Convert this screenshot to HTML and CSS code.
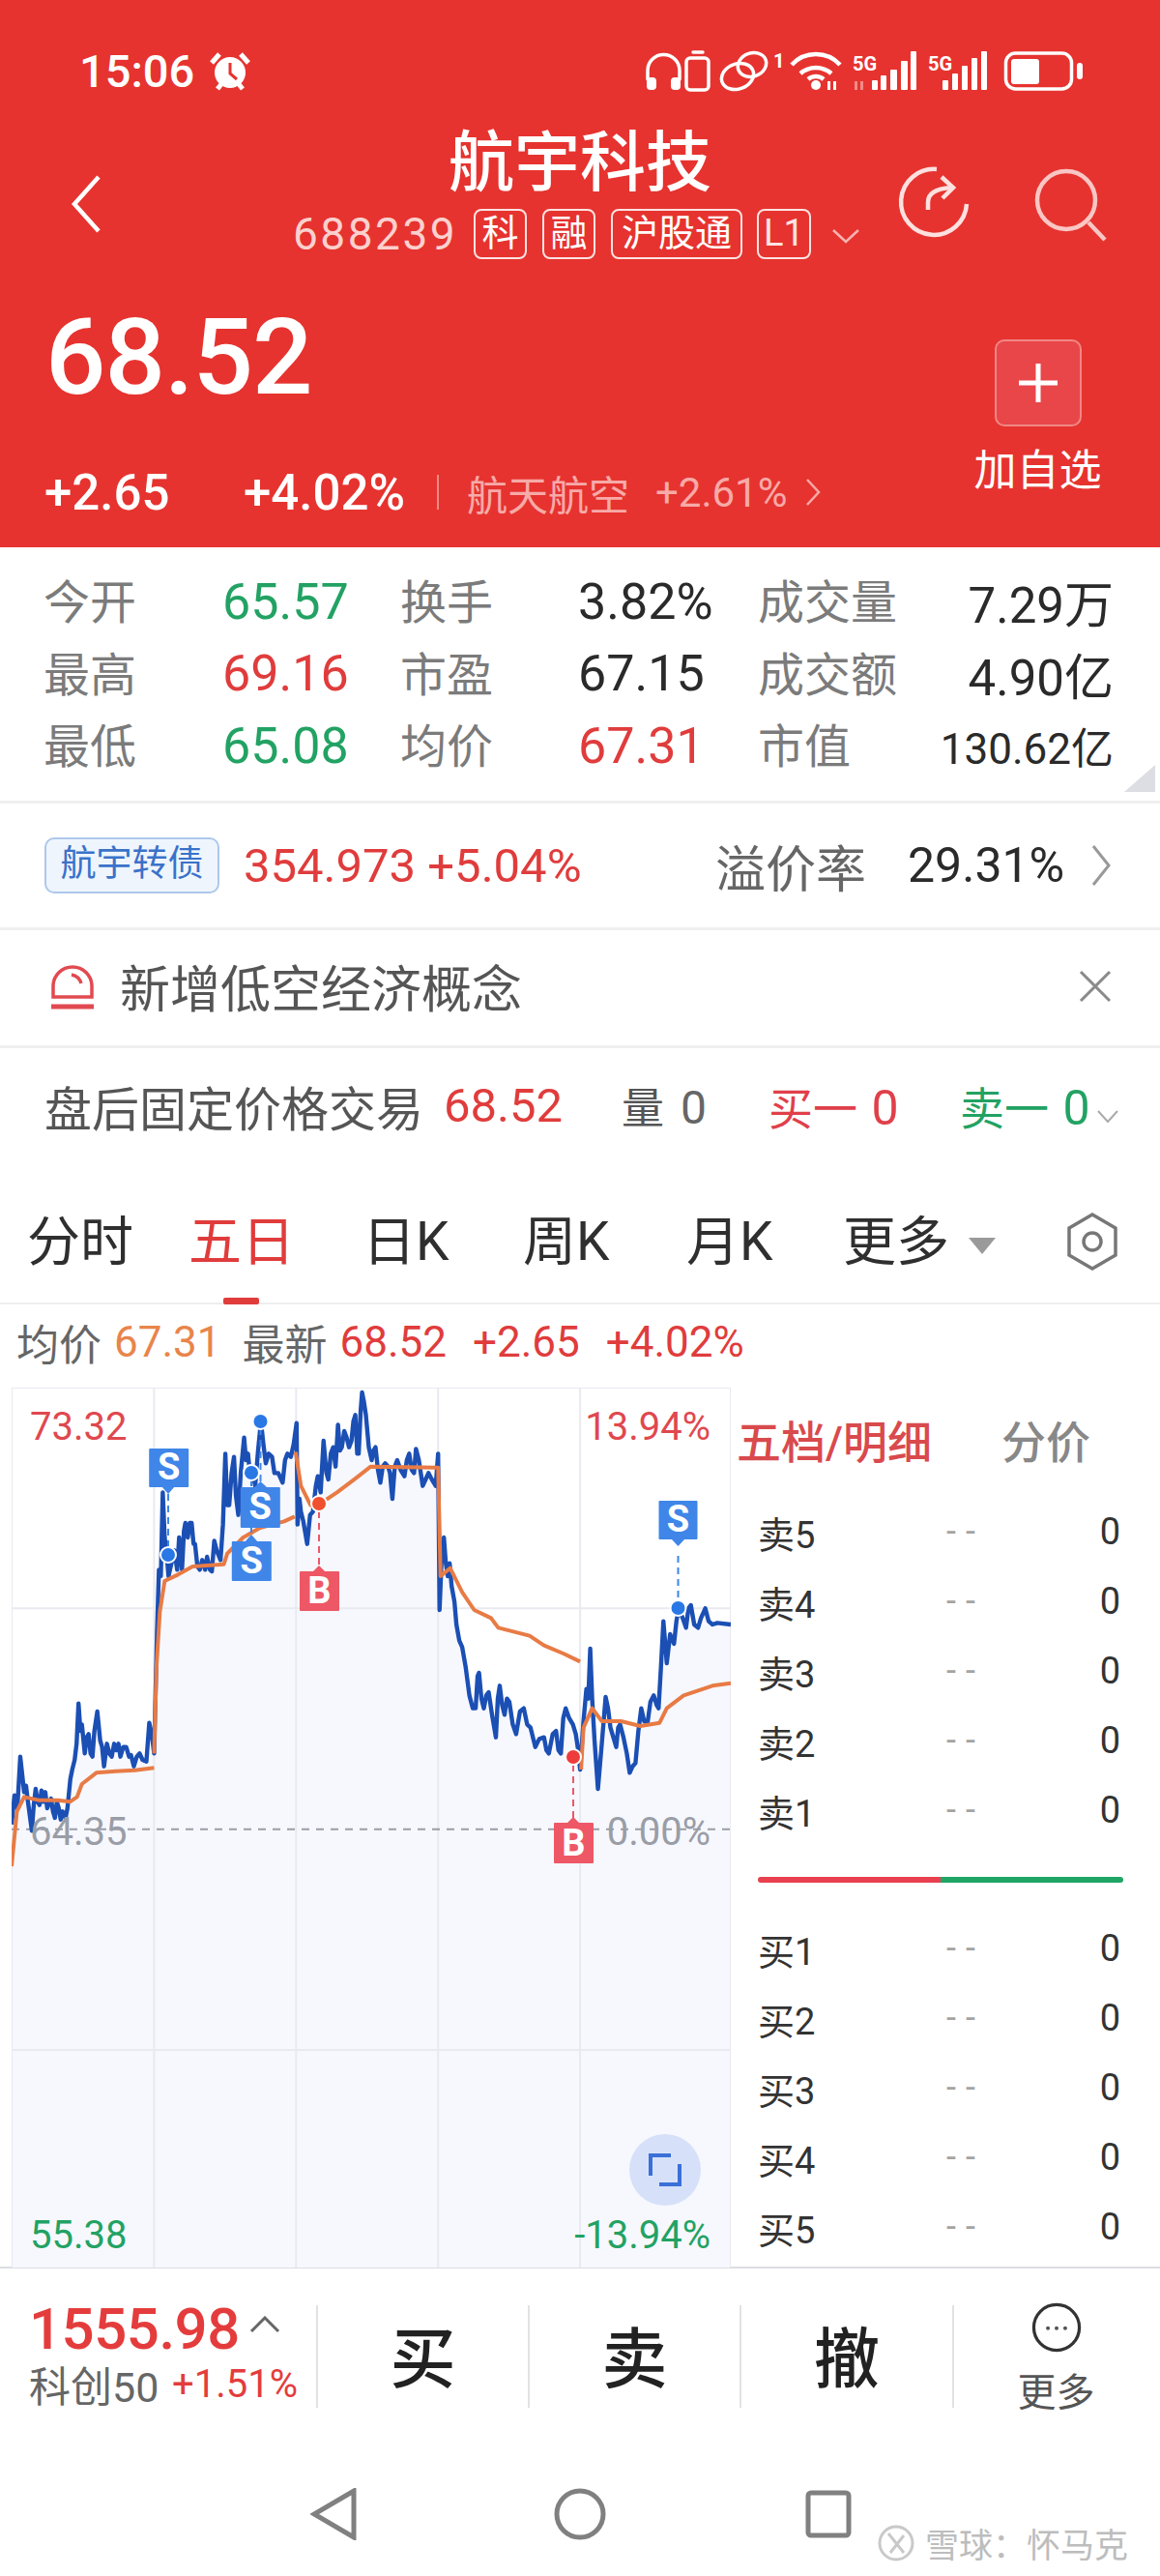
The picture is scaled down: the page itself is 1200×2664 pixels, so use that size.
FILE: index.html
```html
<!DOCTYPE html>
<html lang="zh">
<head>
<meta charset="utf-8">
<title>航宇科技</title>
<link rel="stylesheet" href="styles.css">
</head>
<body>
<div class="page">
  <header class="hero">
    <div class="status">
      <span class="time">15:06</span>
      <svg class="alarm" viewBox="0 0 44 44"><path d="M3 13 L11 4 M41 13 L33 4" class="alarm-ear"/><circle cx="22" cy="23" r="16" class="alarm-body"/><path d="M22 13 V24 L29 30" class="alarm-hand"/><path d="M9 40 L13 35 M35 40 L31 35" class="alarm-ear"/></svg>
      <svg class="status-icons" viewBox="0 0 460 50">
        <g class="si">
          <path d="M8 32 V23 a16.500 16.500 0 0 1 33 0 V32"/>
          <rect x="48" y="10" width="23" height="33" rx="4"/>
          <path d="M55 4 H65"/>
          <ellipse cx="116" cy="17" rx="15" ry="12" transform="rotate(-20 116 17)"/>
          <ellipse cx="101" cy="29" rx="17" ry="13" transform="rotate(-20 101 29)"/>
          <path class="si-w" d="M157 17 a34 34 0 0 1 50 0"/>
          <path class="si-w" d="M166 26 a24 24 0 0 1 32 0"/>
          <path class="si-w" d="M174 32 a12 12 0 0 1 16 0"/>
          <rect x="378.500" y="5" width="68" height="37" rx="10"/>
        </g>
        <g class="sf">
          <rect x="7" y="30" width="10" height="13" rx="4"/>
          <rect x="32" y="30" width="10" height="13" rx="4"/>
          <circle cx="182" cy="38" r="5"/>
          <rect x="194" y="34" width="3" height="9"/>
          <rect x="200" y="34" width="3" height="9"/>
          <rect class="sf-dim" x="222" y="34" width="3" height="9"/>
          <rect class="sf-dim" x="228" y="34" width="3" height="9"/>
          <rect x="240" y="33" width="6" height="10" rx="1"/>
          <rect x="249" y="28" width="6" height="15" rx="1"/>
          <rect x="259" y="22" width="7" height="21" rx="1"/>
          <rect x="270" y="13" width="7" height="30" rx="1"/>
          <rect x="280" y="3" width="6" height="40" rx="1"/>
          <rect x="313" y="33" width="6" height="10" rx="1"/>
          <rect x="323" y="26" width="6" height="17" rx="1"/>
          <rect x="333" y="18" width="6" height="25" rx="1"/>
          <rect x="343" y="10" width="6" height="33" rx="1"/>
          <rect x="353" y="3" width="6" height="40" rx="1"/>
          <rect x="384" y="11" width="29" height="26" rx="3"/>
          <rect x="452" y="15" width="6" height="17" rx="3"/>
          <text x="138" y="20" class="si-one">1</text>
          <text x="220" y="23" class="si-5g">5G</text>
          <text x="298" y="23" class="si-5g">5G</text>
        </g>
      </svg>
    </div>
    <div class="nav">
      <svg class="back" viewBox="0 0 34 62"><path d="M30 3 L5 31 L30 59"/></svg>
      <div class="nav-mid">
        <div class="title">航宇科技</div>
        <div class="subline">
          <span class="code">688239</span>
          <span class="tag">科</span>
          <span class="tag">融</span>
          <span class="tag tag-wide">沪股通</span>
          <span class="tag tag-l">L1</span>
          <svg class="sub-chev" viewBox="0 0 30 16"><path d="M2 2 L15 14 L28 2"/></svg>
        </div>
      </div>
      <svg class="refresh" viewBox="0 0 76 78"><path d="M41 4 A34 34 0 1 0 72 40"/><path d="M32 46 V38 C32 28 41 24 56 23"/><path d="M46 12 L58 23 L47 34"/></svg>
      <svg class="search" viewBox="0 0 76 78"><circle cx="33" cy="35" r="30"/><path d="M56 58 L73 76"/></svg>
    </div>
    <div class="quote">
      <div class="quote-main">
        <div class="price">68.52</div>
        <div class="change">
          <span class="chg-abs">+2.65</span>
          <span class="chg-pct">+4.02%</span>
          <span class="chg-sep"></span>
          <span class="sector">航天航空</span>
          <span class="sector-pct">+2.61%</span>
          <svg class="sector-chev" viewBox="0 0 16 30"><path d="M2 2 L14 15 L2 28"/></svg>
        </div>
      </div>
      <div class="add">
        <div class="add-box"><svg viewBox="0 0 44 44"><path d="M22 2 V42 M2 22 H42"/></svg></div>
        <div class="add-label">加自选</div>
      </div>
    </div>
  </header>

  <section class="stats">
    <span class="s-l">今开</span><span class="s-v green">65.57</span><span class="s-l">换手</span><span class="s-v">3.82%</span><span class="s-l">成交量</span><span class="s-v s-r">7.29万</span>
    <span class="s-l">最高</span><span class="s-v red">69.16</span><span class="s-l">市盈</span><span class="s-v">67.15</span><span class="s-l">成交额</span><span class="s-v s-r">4.90亿</span>
    <span class="s-l">最低</span><span class="s-v green">65.08</span><span class="s-l">均价</span><span class="s-v red">67.31</span><span class="s-l">市值</span><span class="s-v s-r s-small">130.62亿</span>
    <i class="corner"></i>
  </section>

  <section class="bond">
    <span class="bond-tag">航宇转债</span>
    <span class="bond-val">354.973 +5.04%</span>
    <span class="bond-prem">溢价率</span>
    <span class="bond-rate">29.31%</span>
    <svg class="bond-chev" viewBox="0 0 20 44"><path d="M2 2 L18 22 L2 42"/></svg>
  </section>

  <section class="notice">
    <svg class="notice-ic" viewBox="0 0 46 48"><path d="M3 35 V24 a20 20 0 0 1 40 0 V35 Z"/><path d="M22 12 a13 13 0 0 1 10 9"/><path d="M1 45 H45" class="notice-base"/></svg>
    <span class="notice-text">新增低空经济概念</span>
    <svg class="notice-x" viewBox="0 0 34 34"><path d="M2 2 L32 32 M32 2 L2 32"/></svg>
  </section>

  <section class="after">
    <span class="af-label">盘后固定价格交易</span>
    <span class="af-price">68.52</span>
    <span class="af-vol">量 <em>0</em></span>
    <span class="af-buy">买一 <em>0</em></span>
    <span class="af-sell">卖一 <em>0</em></span>
    <svg class="af-chev" viewBox="0 0 22 14"><path d="M1 1 L11 12 L21 1"/></svg>
  </section>

  <nav class="tabs">
    <span class="tab">分时</span>
    <span class="tab tab-on">五日</span>
    <span class="tab">日K</span>
    <span class="tab">周K</span>
    <span class="tab">月K</span>
    <span class="tab tab-more">更多<i class="tri"></i></span>
    <svg class="hex" viewBox="0 0 54 62"><path d="M27 3 L51 17 V45 L27 59 L3 45 V17 Z"/><circle cx="27" cy="31" r="9"/></svg>
  </nav>

  <div class="legend">
    <span class="lg-l">均价</span><span class="lg-o">67.31</span>
    <span class="lg-l lg-l2">最新</span><span class="lg-r">68.52</span><span class="lg-r">+2.65</span><span class="lg-r">+4.02%</span>
  </div>

  <div class="market">
    <div class="chart">
      <svg class="plot" viewBox="24 135 1494 2730" preserveAspectRatio="none">
        <polygon class="area" points="24,1490 30,1400 42,1280 50,1390 58,1400 66,1510 74,1380 82,1430 90,1390 98,1440 106,1410 114,1470 122,1430 130,1470 140,1440 146,1350 155,1290 163,1115 170,1180 176,1270 184,1210 192,1280 202,1140 208,1230 216,1310 222,1240 232,1280 242,1240 250,1280 262,1250 278,1310 290,1270 304,1295 310,1175 320,1270 326,900 330,700 338,460 342,600 350,720 372,600 378,700 385,555 398,555 405,620 415,690 430,660 440,700 445,610 458,670 468,340 476,500 486,350 495,530 507,290 515,340 523,380 530,440 542,240 552,370 565,350 587,430 597,340 610,310 616,245 618,560 625,520 638,620 650,520 660,410 672,300 682,420 692,320 702,250 710,320 720,260 730,300 738,220 745,340 752,150 760,220 772,360 780,320 790,430 800,370 815,480 825,360 840,410 850,340 860,400 864,325 878,440 890,400 905,440 910,340 913,825 922,600 930,720 938,750 948,870 960,940 975,1090 988,1130 995,1020 1005,1130 1015,1080 1030,1220 1038,1060 1048,1150 1058,1110 1072,1210 1088,1130 1112,1250 1130,1220 1140,1270 1155,1200 1165,1270 1175,1130 1190,1180 1200,1250 1205,1320 1218,1070 1226,945 1235,1230 1242,1380 1258,1095 1268,1190 1280,1250 1288,1180 1308,1330 1320,1300 1332,1130 1345,1175 1358,1090 1368,1130 1378,860 1385,990 1392,900 1400,930 1410,820 1425,880 1435,810 1450,880 1465,820 1480,870 1518,870 1518,2865 24,2865"/>
        <g class="grid">
          <path d="M320 135 V2865 M615 135 V2865 M910 135 V2865 M1205 135 V2865 M1518 135 V2865 M24 135 V2865 M24 135 H1518 M24 820 H1518 M24 2190 H1518"/>
        </g>
        <path class="mid" d="M24 1505 H1518"/>
        <polyline class="price-line" points="24,1490 30,1400 36,1440 42,1280 50,1390 54,1370 58,1420 66,1510 70,1430 74,1380 78,1420 82,1430 86,1385 90,1420 94,1390 98,1440 106,1410 110,1450 114,1470 118,1420 122,1440 126,1475 130,1450 136,1470 140,1440 146,1350 150,1320 155,1290 159,1240 163,1115 167,1200 170,1180 176,1270 180,1220 184,1210 188,1270 192,1280 196,1200 202,1140 208,1230 212,1250 216,1310 222,1240 227,1270 232,1280 237,1240 242,1260 246,1240 250,1280 256,1250 262,1250 268,1280 272,1275 278,1310 284,1280 290,1270 296,1290 304,1295 310,1175 316,1220 320,1270 326,900 330,700 334,720 338,460 342,600 346,650 350,720 356,680 362,640 368,700 372,600 378,700 382,580 385,555 390,600 394,555 398,555 402,620 405,620 410,690 415,700 420,670 426,700 430,660 436,700 440,705 445,610 450,640 458,670 463,560 468,340 472,500 476,500 481,400 486,350 490,470 495,530 500,400 507,290 511,360 515,340 519,400 523,380 530,440 536,330 542,240 547,310 552,370 558,340 565,350 570,400 578,400 587,430 592,360 597,340 604,350 610,310 616,245 618,560 622,480 625,520 630,550 638,620 644,530 650,520 656,440 660,410 666,460 672,300 678,400 682,420 687,340 692,320 697,380 702,250 706,330 710,320 715,270 720,290 725,320 730,300 734,240 738,220 742,340 745,340 749,210 752,150 756,180 760,220 766,320 772,360 776,330 780,320 785,390 790,430 795,380 800,370 806,380 810,400 815,480 820,380 825,360 832,390 840,410 845,360 850,340 855,390 860,400 864,325 870,360 878,440 884,420 890,400 897,420 905,440 910,340 913,825 918,640 922,600 926,680 930,720 934,680 938,750 944,800 948,870 954,920 960,940 967,1000 975,1090 982,1130 988,1130 992,1030 995,1020 1000,1100 1005,1130 1010,1090 1015,1080 1022,1150 1030,1220 1034,1100 1038,1060 1043,1120 1048,1150 1053,1100 1058,1110 1065,1180 1072,1210 1080,1140 1088,1130 1095,1180 1102,1190 1112,1250 1120,1225 1130,1220 1135,1260 1140,1270 1148,1210 1155,1200 1160,1260 1165,1270 1170,1160 1175,1130 1182,1160 1190,1180 1196,1210 1200,1250 1205,1320 1212,1170 1218,1070 1222,1100 1226,945 1230,1100 1235,1230 1242,1380 1250,1240 1258,1095 1263,1130 1268,1190 1274,1220 1280,1250 1284,1190 1288,1180 1295,1220 1302,1270 1308,1330 1314,1310 1320,1300 1326,1200 1332,1130 1338,1170 1345,1175 1351,1110 1358,1090 1364,1120 1368,1130 1373,1000 1378,860 1385,990 1392,900 1400,930 1405,860 1410,820 1418,850 1425,880 1430,820 1435,810 1442,870 1450,880 1456,850 1465,820 1472,860 1480,870 1490,865 1518,870"/>
        <polyline class="avg-line" points="24,1620 35,1450 50,1405 80,1415 120,1415 145,1420 160,1405 170,1365 200,1330 240,1325 280,1322 320,1315"/>
        <polyline class="avg-line" points="320,1270 325,1000 332,830 342,735 370,715 400,690 465,683 472,650 505,600 540,570 590,550 612,535"/>
        <polyline class="avg-line" points="614,335 625,440 645,500 665,495 700,460 740,415 770,380 910,383 915,720 935,695 960,770 985,825 1020,850 1035,880 1100,905 1130,935 1170,960 1205,985"/>
        <polyline class="avg-line" points="1207,1320 1212,1190 1230,1130 1250,1170 1290,1170 1330,1185 1370,1175 1385,1130 1420,1090 1480,1060 1518,1052"/>
      </svg>
      <svg class="marks" viewBox="0 0 744 910">
        <g class="mk-s">
          <path class="dash-s" d="M162 110 V165 M248 95 V150 M257.500 42 V98 M689.500 174 V222"/>
          <rect x="227.800" y="159" width="41" height="41" rx="1"/><path d="M241 160 L248 152 L255 160 Z"/>
          <rect x="236.800" y="103" width="41" height="42" rx="1"/><path d="M250 104 L257.500 97 L265 104 Z"/>
          <rect x="142.200" y="63" width="41" height="40" rx="1"/><path d="M155 102 L162 110 L169 102 Z"/>
          <rect x="669.500" y="117" width="40" height="40" rx="1"/><path d="M682 156 L689.500 164 L697 156 Z"/>
          <circle class="dot" cx="162" cy="173" r="8"/>
          <circle class="dot" cx="248" cy="88" r="8"/>
          <circle class="dot" cx="257.500" cy="35" r="8"/>
          <circle class="dot" cx="689.500" cy="228" r="8"/>
        </g>
        <g class="mk-b">
          <path class="dash-b" d="M318 128 V185 M581 390 V445"/>
          <rect x="298" y="190" width="41" height="41" rx="1"/><path d="M311 191 L318 184 L325 191 Z"/>
          <rect x="561" y="450" width="41" height="42" rx="1"/><path d="M574 451 L581 444 L588 451 Z"/>
          <circle class="dot-o" cx="318" cy="120" r="8"/>
          <circle class="dot-r" cx="581" cy="382" r="8"/>
        </g>
        <g class="mk-t">
          <text x="162.700" y="95">S</text><text x="257.300" y="136">S</text><text x="248.300" y="192">S</text><text x="318.500" y="223">B</text><text x="689.500" y="149">S</text><text x="581.500" y="484">B</text>
        </g>
      </svg>
      <span class="ax ax-tl red">73.32</span>
      <span class="ax ax-tr red">13.94%</span>
      <span class="ax ax-ml">64.35</span>
      <span class="ax ax-mr">0.00%</span>
      <span class="ax ax-bl green">55.38</span>
      <span class="ax ax-br green">-13.94%</span>
      <div class="expand"><svg viewBox="0 0 34 34"><path d="M2 23 V2 H23 M32 11 V32 H11"/></svg></div>
    </div>
    <aside class="book">
      <div class="book-head"><span class="bh-on">五档/明细</span><span class="bh-off">分价</span></div>
      <div class="b-row"><span>卖5</span><span class="dd">--</span><span class="b-n">0</span></div>
      <div class="b-row"><span>卖4</span><span class="dd">--</span><span class="b-n">0</span></div>
      <div class="b-row"><span>卖3</span><span class="dd">--</span><span class="b-n">0</span></div>
      <div class="b-row"><span>卖2</span><span class="dd">--</span><span class="b-n">0</span></div>
      <div class="b-row"><span>卖1</span><span class="dd">--</span><span class="b-n">0</span></div>
      <div class="b-bar"><i class="bar-r"></i><i class="bar-g"></i></div>
      <div class="b-row"><span>买1</span><span class="dd">--</span><span class="b-n">0</span></div>
      <div class="b-row"><span>买2</span><span class="dd">--</span><span class="b-n">0</span></div>
      <div class="b-row"><span>买3</span><span class="dd">--</span><span class="b-n">0</span></div>
      <div class="b-row"><span>买4</span><span class="dd">--</span><span class="b-n">0</span></div>
      <div class="b-row"><span>买5</span><span class="dd">--</span><span class="b-n">0</span></div>
    </aside>
  </div>

  <footer class="toolbar">
    <div class="index">
      <div class="idx-top"><span class="idx-val">1555.98</span><svg class="idx-up" viewBox="0 0 32 18"><path d="M2 16 L16 2 L30 16"/></svg></div>
      <div class="idx-sub"><span class="idx-name">科创50</span><span class="idx-pct">+1.51%</span></div>
    </div>
    <div class="act">买</div>
    <div class="act">卖</div>
    <div class="act">撤</div>
    <div class="more">
      <svg viewBox="0 0 64 64"><circle cx="32" cy="32" r="29"/><circle class="md" cx="21" cy="33" r="2.500"/><circle class="md" cx="32" cy="33" r="2.500"/><circle class="md" cx="43" cy="33" r="2.500"/></svg>
      <span>更多</span>
    </div>
  </footer>

  <div class="sysnav">
    <svg class="sys-back" viewBox="0 0 48 54"><path d="M45 3 V51 L4 27 Z"/></svg>
    <svg class="sys-home" viewBox="0 0 54 54"><circle cx="27" cy="27" r="24"/></svg>
    <svg class="sys-rec" viewBox="0 0 48 50"><rect x="3" y="3" width="42" height="44" rx="3"/></svg>
    <div class="wm">
      <svg viewBox="0 0 40 40"><circle cx="20" cy="20" r="17"/><path d="M12 10 L28 30 M28 12 L14 30"/></svg>
      <span>雪球：怀马克</span>
    </div>
  </div>
</div>
</body>
</html>
```
FILE: styles.css
```css
* { box-sizing: border-box; }
html, body { margin: 0; padding: 0; background: #fff; }
body { font-family: Roboto, "Noto Sans CJK SC", sans-serif; color: #2a2a2a; }
.page { width: 1200px; height: 2664px; overflow: hidden; display: flex; flex-direction: column; }
svg { display: block; fill: none; }
em { font-style: normal; }
.red { color: #e03c3c; }
.green { color: #22a263; }

/* hero */
.hero { height: 566px; background: #e6332f; color: #fff; flex: none; display: flex; flex-direction: column; }
.status { height: 125px; padding: 49px 0 0 82px; display: flex; align-items: flex-start; }
.time { font-size: 47px; font-weight: 500; line-height: 50px; width: 134px; }
.alarm { width: 44px; height: 44px; margin-top: 3px; }
.alarm-body { fill: #fff; }
.alarm-ear { stroke: #fff; stroke-width: 5; }
.alarm-hand { stroke: #e6332f; stroke-width: 3; }
.status-icons { width: 460px; height: 50px; margin-left: 402px; margin-top: 1px; }
.si path, .si rect, .si ellipse { stroke: #fff; stroke-width: 3.500; fill: none; stroke-linecap: round; }
.si .si-w { stroke-width: 4.500; stroke-linecap: butt; }
.sf { fill: #fff; }
.sf-dim { fill: #f28b88; }
.si-one { font-size: 20px; font-weight: 700; }
.si-5g { font-size: 20px; font-weight: 700; }

.nav { height: 152px; position: relative; display: flex; padding-left: 72px; align-items: flex-start; }
.back { width: 34px; height: 62px; margin-top: 55px; }
.back path { stroke: #fff; stroke-width: 4.500; }
.nav-mid { width: 826px; display: flex; flex-direction: column; align-items: center; }
.title { font-size: 68px; line-height: 88px; font-weight: 500; text-align: center; padding-left: 162px; width: 826px; }
.subline { display: flex; align-items: center; width: 826px; padding-left: 197px; height: 54px; margin-top: 2px; }
.code { font-size: 46px; letter-spacing: 2.500px; color: #fbd0ce; width: 187px; }
.tag { width: 55px; height: 52px; border: 2px solid #fde3e2; border-radius: 8px; font-size: 38px; line-height: 46px; text-align: center; margin-right: 16px; color: #fff; flex: none; }
.tag-wide { width: 136px; margin-right: 15px; }
.tag-l { width: 56px; margin-right: 21px; color: #fde3e2; }
.sub-chev { width: 30px; height: 16px; margin-top: 4px; }
.sub-chev path { stroke: #f7b3b1; stroke-width: 2.500; }
.refresh { width: 76px; height: 78px; margin: 46px 0 0 -4px; flex: none; }
.refresh path { stroke: #fde0df; stroke-width: 4.500; }
.search { width: 76px; height: 78px; margin: 47px 0 0 66px; flex: none; }
.search circle, .search path { stroke: #f9c6c4; stroke-width: 4.500; }

.quote { flex: 1; display: flex; justify-content: space-between; padding: 0 60px 0 46px; }
.price { font-size: 110px; line-height: 120px; font-weight: 500; margin: 33px 0 0 1px; letter-spacing: -1px; }
.change { display: flex; align-items: center; margin-top: 54px; height: 50px; }
.chg-abs { font-size: 51px; font-weight: 500; width: 206px; }
.chg-pct { font-size: 51px; font-weight: 500; width: 200px; }
.chg-sep { width: 2px; height: 36px; background: #f08a87; margin-right: 29px; }
.sector { font-size: 42px; color: #f7aaa8; width: 195px; }
.sector-pct { font-size: 42px; color: #f7aaa8; width: 155px; white-space: nowrap; }
.sector-chev { width: 16px; height: 30px; }
.sector-chev path { stroke: #f7aaa8; stroke-width: 2.500; }
.add { width: 133px; display: flex; flex-direction: column; align-items: center; padding-top: 74px; }
.add-box { width: 90px; height: 90px; border: 2px solid #f08785; border-radius: 10px; background: #e9464a; display: flex; align-items: center; justify-content: center; }
.add-box svg { width: 44px; height: 44px; }
.add-box path { stroke: #fff; stroke-width: 5; }
.add-label { font-size: 44px; line-height: 60px; margin-top: 16px; white-space: nowrap; }

/* stats */
.stats { position: relative; height: 265px; flex: none; padding: 19px 48px 0 45px; display: grid; grid-template-columns: 185px 184px 184px 186px 180px 1fr; grid-auto-rows: 74.500px; align-items: center; border-bottom: 3px solid #efefef; }
.s-l { font-size: 48px; color: #7b7b7b; white-space: nowrap; padding-bottom: 6px; }
.s-v { font-size: 52px; white-space: nowrap; }
.s-r { justify-self: end; font-size: 51px; }
.s-small { font-size: 44px; }
.corner { position: absolute; right: 5px; bottom: 9px; width: 32px; height: 28px; background: #dcdee3; clip-path: polygon(100% 0, 100% 100%, 0 100%); }

/* bond */
.bond { height: 131px; flex: none; display: flex; align-items: center; padding-left: 46px; border-bottom: 3px solid #efefef; }
.bond-tag { width: 181px; height: 58px; border: 2px solid #aec8ea; border-radius: 10px; background: #eef5fd; color: #3a72c9; font-size: 37px; line-height: 52px; text-align: center; margin-right: 25px; }
.bond-val { font-size: 49px; color: #e03c3c; width: 488px; white-space: nowrap; }
.bond-prem { font-size: 52px; color: #666; width: 199px; }
.bond-rate { font-size: 50px; color: #2a2a2a; width: 190px; }
.bond-chev { width: 20px; height: 44px; }
.bond-chev path { stroke: #999; stroke-width: 3; }

/* notice */
.notice { height: 122px; flex: none; display: flex; align-items: center; padding: 0 0 4px 52px; border-bottom: 3px solid #efefef; }
.notice-ic { width: 46px; height: 48px; }
.notice-ic path { stroke: #e14a50; stroke-width: 3.500; }
.notice-ic .notice-base { stroke-width: 5; }
.notice-text { font-size: 52px; color: #555; margin-left: 26px; width: 992px; white-space: nowrap; }
.notice-x { width: 34px; height: 34px; }
.notice-x path { stroke: #8a8a8a; stroke-width: 3; }

/* after hours */
.after { height: 126px; flex: none; display: flex; align-items: center; padding: 0 0 8px 46px; position: relative; }
.af-label { font-size: 49px; color: #555; width: 413px; white-space: nowrap; }
.af-price { font-size: 49px; color: #e03c3c; width: 184px; }
.af-vol { font-size: 44px; color: #555; width: 152px; }
.af-vol em { color: #666; margin-left: 6px; font-size: 48px; }
.af-buy { font-size: 46px; color: #e0404a; width: 198px; }
.af-buy em, .af-sell em { font-size: 50px; margin-left: 3px; }
.af-sell { font-size: 46px; color: #22a263; width: 142px; white-space: nowrap; }
.af-chev { width: 22px; height: 14px; margin-top: 24px; }
.af-chev path { stroke: #aaa; stroke-width: 2; }

/* tabs */
.tabs { height: 139px; flex: none; display: grid; grid-template-columns: 167px 180px 166px 169px 162px 231px 1fr; padding: 0 0 0 28px; align-items: start; border-bottom: 2px solid #eeeeee; position: relative; }
.tab { font-size: 55px; line-height: 74px; margin-top: 37px; color: #2f2f2f; white-space: nowrap; }
.tab-on { color: #e03c3c; position: relative; height: 102px; }
.tab-on::after { content: ""; position: absolute; left: 36px; bottom: 0; width: 37px; height: 7px; background: #e03c3c; border-radius: 2px; }
.tri { display: inline-block; width: 0; height: 0; border-left: 14px solid transparent; border-right: 14px solid transparent; border-top: 17px solid #9a9a9a; margin-left: 20px; vertical-align: 6px; }
.hex { width: 54px; height: 62px; margin-top: 43px; }
.hex path, .hex circle { stroke: #777; stroke-width: 3.500; }

/* legend */
.legend { height: 86px; flex: none; display: flex; align-items: center; padding: 0 0 9px 17px; font-size: 44px; white-space: nowrap; }
.lg-l { color: #666; margin-right: 13px; }
.lg-l2 { margin-left: 22px; }
.lg-o { color: #e8854b; }
.lg-r { color: #e03c3c; margin-right: 27px; }

/* chart */
.market { display: flex; height: 911px; flex: none; padding-left: 12px; border-bottom: 2px solid #dcdde2; }
.chart { position: relative; width: 744px; height: 910px; flex: none; }
.plot, .marks { position: absolute; left: 0; top: 0; width: 744px; height: 910px; }
.area { fill: #f6f8fe; }
.grid path { stroke: #e9eaf0; stroke-width: 2; vector-effect: non-scaling-stroke; }
.mid { stroke: #9a9da6; stroke-width: 2; stroke-dasharray: 8 7; vector-effect: non-scaling-stroke; }
.price-line { stroke: #1b4fb4; stroke-width: 4.400; vector-effect: non-scaling-stroke; stroke-linejoin: round; }
.avg-line { stroke: #e87b45; stroke-width: 4; vector-effect: non-scaling-stroke; stroke-linejoin: round; }
.mk-s rect, .mk-s path { fill: #3f86e8; }
.mk-b rect, .mk-b path { fill: #ee5766; }
.mk-s .dash-s { fill: none; stroke: #3f86e8; stroke-width: 2; stroke-dasharray: 7 5; }
.mk-b .dash-b { fill: none; stroke: #ee5766; stroke-width: 2; stroke-dasharray: 7 5; }
.dot { fill: #2a78e6; stroke: #fff; stroke-width: 2; }
.dot-o { fill: #f0502e; stroke: #fff; stroke-width: 2; }
.dot-r { fill: #ee3c3c; stroke: #fff; stroke-width: 2; }
.mk-t text { fill: #fff; font-size: 38px; font-weight: 700; text-anchor: middle; }
.ax { position: absolute; font-size: 40px; line-height: 46px; color: #9a9da6; white-space: nowrap; }
.ax.red { color: #e0484f; }
.ax.green { color: #22a263; }
.ax-tl { left: 19px; top: 18px; }
.ax-tr { right: 21px; top: 18px; }
.ax-ml { left: 19px; top: 437px; }
.ax-mr { right: 21px; top: 437px; }
.ax-bl { left: 19px; top: 854px; }
.ax-br { right: 21px; top: 854px; }
.expand { position: absolute; left: 639px; top: 772px; width: 74px; height: 74px; border-radius: 50%; background: #d6e1f9; display: flex; align-items: center; justify-content: center; }
.expand svg { width: 34px; height: 34px; }
.expand path { stroke: #3a6fd8; stroke-width: 4; }

/* order book */
.book { flex: 1; padding-left: 6px; }
.book-head { height: 113px; display: flex; align-items: flex-start; font-size: 46px; line-height: 56px; padding-top: 29px; }
.bh-on { color: #d94a4d; width: 274px; white-space: nowrap; font-weight: 500; }
.bh-off { color: #888; font-weight: 500; }
.b-row { height: 72px; display: grid; grid-template-columns: 195px 1fr auto; align-items: center; padding: 0 41px 0 22px; font-size: 38px; color: #333; }
.dd { color: #a3a3a3; letter-spacing: 10px; font-size: 36px; }
.b-n { font-size: 38px; }
.b-bar { height: 71px; display: flex; align-items: center; padding: 0 38px 0 22px; }
.bar-r { display: block; height: 6px; width: 189px; background: #e8404e; border-radius: 3px 0 0 3px; }
.bar-g { display: block; height: 6px; flex: 1; background: #1fa565; border-radius: 0 3px 3px 0; }

/* toolbar */
.toolbar { height: 168px; flex: none; display: grid; grid-template-columns: 327px 219px 219px 220px 1fr; padding-top: 38px; align-items: start; }
.index { height: 106px; padding-left: 30px; }
.idx-top { display: flex; align-items: center; height: 50px; }
.idx-val { font-size: 60px; line-height: 50px; color: #e43c3c; font-weight: 500; width: 228px; letter-spacing: -.5px; }
.idx-up { width: 32px; height: 18px; margin-top: -10px; }
.idx-up path { stroke: #666; stroke-width: 3; }
.idx-sub { display: flex; align-items: center; margin-top: 9px; height: 44px; white-space: nowrap; }
.idx-name { font-size: 43px; color: #666; width: 148px; }
.idx-pct { font-size: 40px; color: #e43c3c; }
.act { height: 106px; border-left: 2px solid #e2e2e2; font-size: 68px; line-height: 114px; text-align: center; color: #222; font-weight: 500; }
.more { height: 120px; display: flex; flex-direction: column; align-items: center; position: relative; margin-top: -3px; }
.more::before { content: ""; position: absolute; left: 0; top: 3px; height: 106px; width: 2px; background: #e2e2e2; }
.more svg { width: 66px; height: 66px; }
.more circle { stroke: #333; stroke-width: 4; }
.more .md { fill: #555; stroke: none; }
.more span { font-size: 40px; line-height: 52px; color: #555; margin-top: 16px; }

/* system nav */
.sysnav { flex: 1; position: relative; display: flex; align-items: flex-start; padding: 59px 0 0 321px; }
.sys-back { width: 48px; height: 54px; }
.sys-home { width: 54px; height: 54px; margin-left: 204px; }
.sys-rec { width: 48px; height: 50px; margin-left: 206px; margin-top: 2px; }
.sysnav path, .sysnav circle, .sysnav rect { stroke: #808080; stroke-width: 5; }
.wm { position: absolute; left: 907px; top: 90px; display: flex; align-items: center; color: #bdbdbd; font-size: 35px; white-space: nowrap; }
.wm svg { width: 40px; height: 40px; margin-right: 10px; }
.wm svg circle, .wm svg path { stroke: #c9c9c9; stroke-width: 3; }
```
